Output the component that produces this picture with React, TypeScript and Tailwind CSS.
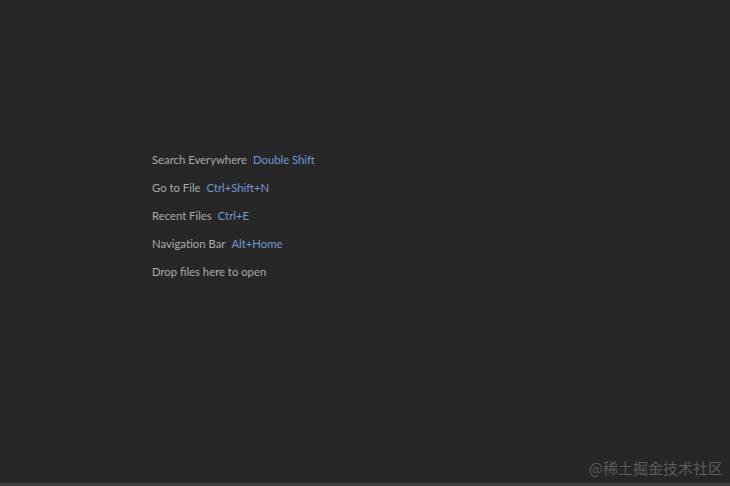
import React from 'react';

const hints = [
  { label: 'Search Everywhere', keys: 'Double Shift' },
  { label: 'Go to File', keys: 'Ctrl+Shift+N' },
  { label: 'Recent Files', keys: 'Ctrl+E' },
  { label: 'Navigation Bar', keys: 'Alt+Home' },
  { label: 'Drop files here to open', keys: '' },
];

const App: React.FC = () => {
  return (
    <div
      className="w-[730px] h-[486px] bg-[#272727] flex flex-col overflow-hidden"
      style={{ fontFamily: 'Lato, "Open Sans", sans-serif' }}
    >
      <div className="flex-1 flex flex-col pt-[150px] pl-[152px]">
        {hints.map((h) => (
          <div key={h.label} className="h-[28px] flex items-start text-[11.3px] leading-[20px]">
            <span className="text-[#ababab]">{h.label}</span>
            {h.keys && <span className="ml-[6px] text-[#7199d6]">{h.keys}</span>}
          </div>
        ))}
        <div className="flex-1" />
        <div
          className="self-end pr-[7px] pb-[4px] text-[15px] text-[#5c5c5c]"
          style={{ fontFamily: '"Noto Sans CJK SC", sans-serif' }}
        >
          @稀土掘金技术社区
        </div>
      </div>
      <div className="h-[3px] bg-[#3d3d3d]" />
    </div>
  );
};

export default App;
